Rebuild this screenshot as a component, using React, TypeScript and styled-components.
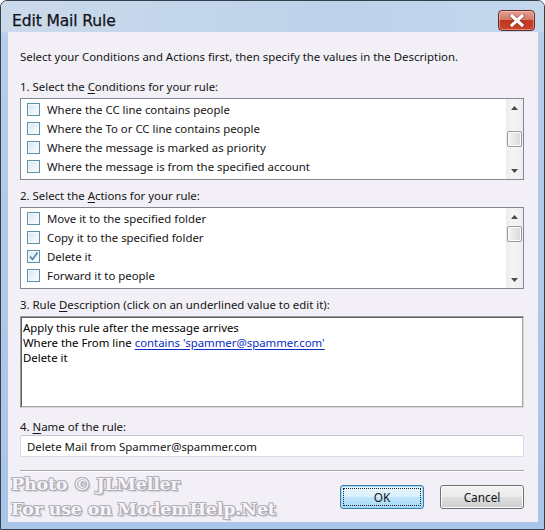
import styled, { createGlobalStyle } from "styled-components"

const GlobalStyle = createGlobalStyle`
  html, body {
    margin: 0;
    padding: 0;
    background: #ffffff;
  }
  * {
    box-sizing: border-box;
  }
`

const uiFont = `
  font-family: "Noto Sans", "Open Sans", sans-serif;
  font-size: 11.4px;
  color: #141414;
`

const Window = styled.div`
  width: 545px;
  height: 530px;
  border: 1px solid #36404c;
  border-radius: 7px 7px 0 0;
  background: linear-gradient(to bottom, #c9d9ec 0px, #b6cdea 40px, #a9c5e8 100%);
  display: flex;
  flex-direction: column;
  overflow: hidden;
`

const TitleBar = styled.div`
  height: 31px;
  flex-shrink: 0;
  display: flex;
  justify-content: space-between;
  align-items: flex-start;
  padding: 0 9px 0 11px;
  background: linear-gradient(to right, #cbdaeb, #bdd2ea 60%, #c3d7ed);
`

const Title = styled.div`
  font-family: "DejaVu Sans", "Noto Sans", sans-serif;
  font-size: 15.5px;
  line-height: 18px;
  margin-top: 11px;
  color: #121216;
  letter-spacing: -0.1px;
  -webkit-text-stroke: 0.25px #121216;
`

const CloseButton = styled.div`
  margin-top: 9px;
  width: 37px;
  height: 21px;
  border: 1px solid #6a2a22;
  border-radius: 4px;
  background: linear-gradient(
    to bottom,
    #e3a196 0%,
    #d47868 45%,
    #c0381f 50%,
    #c9452b 100%
  );
  box-shadow: inset 0 0 0 1px rgba(255, 220, 210, 0.45);
  display: flex;
  align-items: center;
  justify-content: center;
`

const Client = styled.div`
  ${uiFont}
  position: relative;
  flex: 1;
  margin: 0 6px 7px 7px;
  padding: 17px 14px 0 12px;
  background: #f2f0f6;
  display: flex;
  flex-direction: column;
`

const Intro = styled.div`
  line-height: 15px;
`

const Section = styled.div<{ $top: number; $gap: number }>`
  margin-top: ${(p) => p.$top}px;
  display: flex;
  flex-direction: column;
  gap: ${(p) => p.$gap}px;
`

const Label = styled.div`
  line-height: 16px;
  & u {
    text-decoration: underline;
    text-underline-offset: 2px;
  }
`

const ListBox = styled.div`
  height: 82px;
  border: 1px solid #838790;
  background: #ffffff;
  display: flex;
`

const Items = styled.div`
  flex: 1;
  padding: 1px 0 0 6px;
  display: flex;
  flex-direction: column;
`

const Row = styled.div`
  height: 19px;
  display: flex;
  align-items: center;
  gap: 7px;
  white-space: nowrap;
`

const CheckBox = styled.div`
  width: 13px;
  height: 13px;
  flex-shrink: 0;
  border: 1px solid #5a92aa;
  background: linear-gradient(135deg, #d6e6ee 0%, #eef5f8 60%, #fbfdfe 100%);
  box-shadow: inset 0 0 0 1px #f4f8fa;
  display: flex;
  align-items: center;
  justify-content: center;
`

const ScrollBar = styled.div`
  width: 17px;
  flex-shrink: 0;
  display: flex;
  flex-direction: column;
  background: linear-gradient(to right, #ececec, #f5f5f5 40%, #eeeeee);
`

const ArrowButton = styled.div`
  height: 17px;
  display: flex;
  align-items: center;
  justify-content: center;
`

const Track = styled.div`
  flex: 1;
`

const Thumb = styled.div<{ $offset: number }>`
  margin: ${(p) => p.$offset}px 0 0 1px;
  width: 15px;
  height: 16px;
  border: 1px solid #9a9a9a;
  border-radius: 2px;
  background: linear-gradient(to right, #f6f6f6, #e6e6e6 50%, #d8d8d8);
  box-shadow: inset 0 0 0 1px #fbfbfb;
`

const DescriptionBox = styled.div`
  height: 92px;
  border: 1px solid #9a9a9a;
  border-right-color: #d6d6d6;
  border-bottom-color: #d6d6d6;
  box-shadow: inset 1px 1px 0 #5e5e5e, inset -1px -1px 0 #a8a8a8;
  background: #ffffff;
  padding: 3px 3px 0 2px;
  line-height: 15px;
  color: #000000;
`

const RuleLink = styled.span`
  color: #0c2dc4;
  text-decoration: underline;
  text-underline-offset: 2px;
`

const NameInput = styled.div`
  height: 22px;
  border: 1px solid #dadae0;
  border-top-color: #c4c4cc;
  border-radius: 2px;
  background: #ffffff;
  padding-left: 6px;
  display: flex;
  align-items: center;
`

const Separator = styled.div`
  margin-top: 13px;
  height: 1px;
  background: #a7a5ad;
  box-shadow: 0 1px 0 #ffffff;
`

const Footer = styled.div`
  margin-top: 14px;
  display: flex;
  justify-content: flex-end;
  gap: 16px;
`

const Button = styled.div<{ $primary?: boolean }>`
  width: 84px;
  height: 24px;
  border: 1px solid ${(p) => (p.$primary ? "#3d7bad" : "#707070")};
  border-radius: 3px;
  background: linear-gradient(
    to bottom,
    ${(p) => (p.$primary ? "#eaf6fd" : "#f2f2f2")} 0%,
    ${(p) => (p.$primary ? "#d9f0fc" : "#ebebeb")} 48%,
    ${(p) => (p.$primary ? "#bee6fd" : "#dddddd")} 52%,
    ${(p) => (p.$primary ? "#a7d9f5" : "#cfcfcf")} 100%
  );
  box-shadow: inset 0 0 0 1px ${(p) => (p.$primary ? "#9fdcf7" : "#fcfcfc")};
  display: flex;
  align-items: center;
  justify-content: center;
  padding: 2px;
  font-size: 11.8px;
`

const FocusRing = styled.div<{ $show?: boolean }>`
  width: 100%;
  height: 100%;
  border: 1px dotted ${(p) => (p.$show ? "#202020" : "transparent")};
  display: flex;
  align-items: center;
  justify-content: center;
`

const Watermark = styled.div`
  position: absolute;
  left: 3px;
  top: 440px;
  font-family: "DejaVu Serif", "Liberation Serif", serif;
  font-weight: bold;
  font-size: 17.5px;
  line-height: 25px;
  letter-spacing: -0.2px;
  color: #f6f4f9;
  text-shadow: 1px 0 #b1afb8, -1px 0 #b1afb8, 0 1px #b1afb8, 0 -1px #b1afb8,
    1px 1px #a3a1aa, -1px -1px #c4c2ca, 1px -1px #b9b7c0, -1px 1px #b9b7c0,
    2px 2px 1px #cfcdd5;
  pointer-events: none;
  white-space: nowrap;
`

const ArrowUp = () => (
  <svg width="7" height="4" viewBox="0 0 7 4">
    <path d="M0 4 L3.5 0 L7 4 Z" fill="#4b4b4b" />
  </svg>
)

const ArrowDown = () => (
  <svg width="7" height="4" viewBox="0 0 7 4">
    <path d="M0 0 L7 0 L3.5 4 Z" fill="#4b4b4b" />
  </svg>
)

const CloseGlyph = () => (
  <svg width="16" height="13" viewBox="0 0 16 13">
    <path
      d="M2.5 2 L13.5 11 M13.5 2 L2.5 11"
      stroke="#5a1a12"
      strokeWidth="4.4"
      strokeLinecap="square"
      opacity="0.45"
    />
    <path
      d="M3 2 L13 11 M13 2 L3 11"
      stroke="#ffffff"
      strokeWidth="3.2"
      strokeLinecap="square"
    />
  </svg>
)

const CheckMark = () => (
  <svg width="11" height="11" viewBox="0 0 11 11">
    <path
      d="M2 5.5 L4.5 8.5 L9.5 1.5"
      stroke="#4f7fb3"
      strokeWidth="1.6"
      fill="none"
    />
  </svg>
)

type Option = { text: string; checked?: boolean }

const conditions: Option[] = [
  { text: "Where the CC line contains people" },
  { text: "Where the To or CC line contains people" },
  { text: "Where the message is marked as priority" },
  { text: "Where the message is from the specified account" },
]

const actions: Option[] = [
  { text: "Move it to the specified folder" },
  { text: "Copy it to the specified folder" },
  { text: "Delete it", checked: true },
  { text: "Forward it to people" },
]

const CheckList = ({ options, thumb }: { options: Option[]; thumb: number }) => (
  <ListBox>
    <Items>
      {options.map((o) => (
        <Row key={o.text}>
          <CheckBox>{o.checked && <CheckMark />}</CheckBox>
          {o.text}
        </Row>
      ))}
    </Items>
    <ScrollBar>
      <ArrowButton>
        <ArrowUp />
      </ArrowButton>
      <Track>
        <Thumb $offset={thumb} />
      </Track>
      <ArrowButton>
        <ArrowDown />
      </ArrowButton>
    </ScrollBar>
  </ListBox>
)

const App = () => {
  return (
    <>
      <GlobalStyle />
      <Window>
        <TitleBar>
          <Title>Edit Mail Rule</Title>
          <CloseButton>
            <CloseGlyph />
          </CloseButton>
        </TitleBar>
        <Client>
          <Intro>
            Select your Conditions and Actions first, then specify the values in
            the Description.
          </Intro>

          <Section $top={15} $gap={3}>
            <Label>
              1. Select the <u>C</u>onditions for your rule:
            </Label>
            <CheckList options={conditions} thumb={15} />
          </Section>

          <Section $top={8} $gap={3}>
            <Label>
              2. Select the <u>A</u>ctions for your rule:
            </Label>
            <CheckList options={actions} thumb={1} />
          </Section>

          <Section $top={8} $gap={3}>
            <Label>
              3. Rule <u>D</u>escription (click on an underlined value to edit it):
            </Label>
            <DescriptionBox>
              <div>Apply this rule after the message arrives</div>
              <div>
                Where the From line{" "}
                <RuleLink>contains 'spammer@spammer.com'</RuleLink>
              </div>
              <div>Delete it</div>
            </DescriptionBox>
          </Section>

          <Section $top={11} $gap={0}>
            <Label>
              4. <u>N</u>ame of the rule:
            </Label>
            <NameInput>Delete Mail from Spammer@spammer.com</NameInput>
          </Section>

          <Separator />

          <Footer>
            <Button $primary>
              <FocusRing $show>OK</FocusRing>
            </Button>
            <Button>
              <FocusRing>Cancel</FocusRing>
            </Button>
          </Footer>

          <Watermark>
            <div>Photo © JLMeller</div>
            <div>For use on ModemHelp.Net</div>
          </Watermark>
        </Client>
      </Window>
    </>
  )
}

export default App
